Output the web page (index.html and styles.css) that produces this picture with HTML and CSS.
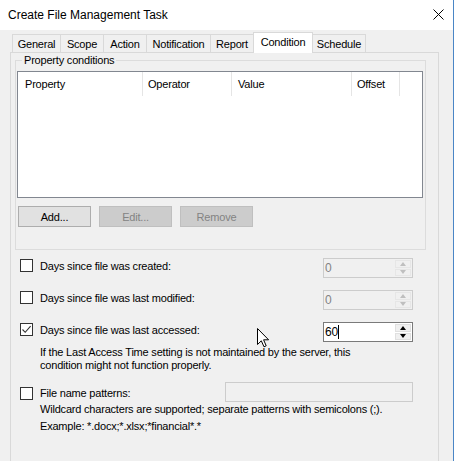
FILE: index.html
```html
<!DOCTYPE html>
<html>
<head>
<meta charset="utf-8">
<link rel="stylesheet" href="styles.css">
</head>
<body>
<div class="screen">
  <div class="window">
    <div class="titlebar">
      <span class="title">Create File Management Task</span>
      <svg class="close" width="11" height="11" viewBox="0 0 11 11"><path d="M0.5 0.5 L10.5 10.5 M10.5 0.5 L0.5 10.5" stroke="#000" stroke-width="1"/></svg>
    </div>
    <div class="client">
      <div class="tabstrip">
        <div class="tab t-general">General</div>
        <div class="tab t-scope">Scope</div>
        <div class="tab t-action">Action</div>
        <div class="tab t-notif">Notification</div>
        <div class="tab t-report">Report</div>
        <div class="tab t-cond selected">Condition</div>
        <div class="tab t-sched">Schedule</div>
      </div>
      <div class="page">
        <fieldset class="group">
          <legend>Property conditions</legend>
          <div class="listview">
            <div class="lv-header">
              <div class="col c1">Property</div>
              <div class="col c2">Operator</div>
              <div class="col c3">Value</div>
              <div class="col c4">Offset</div>
            </div>
          </div>
          <div class="buttons">
            <div class="btn">Add...</div>
            <div class="btn disabled">Edit...</div>
            <div class="btn disabled">Remove</div>
          </div>
        </fieldset>

        <div class="options">
          <div class="row">
            <span class="cb"></span>
            <span class="label">Days since file was created:</span>
            <div class="spin disabled">
              <span class="spin-val">0</span>
              <div class="spin-btns">
                <span class="sb up"><i class="arr-up"></i></span>
                <span class="sb down"><i class="arr-down"></i></span>
              </div>
            </div>
          </div>
          <div class="row">
            <span class="cb"></span>
            <span class="label">Days since file was last modified:</span>
            <div class="spin disabled">
              <span class="spin-val">0</span>
              <div class="spin-btns">
                <span class="sb up"><i class="arr-up"></i></span>
                <span class="sb down"><i class="arr-down"></i></span>
              </div>
            </div>
          </div>
          <div class="row">
            <span class="cb checked"><svg width="11" height="11" viewBox="0 0 11 11"><path d="M1.5 5.5 L4.2 8.3 L9.6 2.2" fill="none" stroke="#333" stroke-width="1.1"/></svg></span>
            <span class="label">Days since file was last accessed:</span>
            <div class="spin">
              <span class="spin-val">60<span class="caret"></span></span>
              <div class="spin-btns">
                <span class="sb up"><i class="arr-up"></i></span>
                <span class="sb down"><i class="arr-down"></i></span>
              </div>
            </div>
          </div>
          <div class="note">If the Last Access Time setting is not maintained by the server, this<br>condition might not function properly.</div>
          <div class="row row-pattern">
            <span class="cb"></span>
            <span class="label">File name patterns:</span>
            <div class="textbox disabled"></div>
          </div>
          <div class="note note2">Wildcard characters are supported; separate patterns with semicolons (;).<br>Example: *.docx;*.xlsx;*financial*.*</div>
        </div>
      </div>
    </div>
  </div>
  <div class="edge"></div>
  <svg class="cursor" width="13" height="21" viewBox="0 0 13 21"><path d="M0.5 0.5 L0.5 16.5 L4.3 12.8 L7 18.8 L9.2 17.8 L6.6 11.8 L11.6 11.8 Z" fill="#fff" stroke="#000" stroke-width="1" stroke-linejoin="miter"/></svg>
</div>
</body>
</html>
```
FILE: styles.css
```css
html, body {
  margin: 0;
  padding: 0;
  background: #ffffff;
}
body {
  font-family: "Liberation Sans", Arial, sans-serif;
  font-size: 11px;
  letter-spacing: -0.2px;
  color: #000;
}
.screen {
  position: relative;
  width: 456px;
  height: 461px;
  display: flex;
  overflow: hidden;
}
.window {
  width: 453px;
  height: 461px;
  background: #f0f0f0;
  display: flex;
  flex-direction: column;
}
.edge {
  width: 1px;
  height: 461px;
  background: #4a86c6;
}
.titlebar {
  height: 30px;
  background: #ffffff;
  display: flex;
  align-items: center;
  justify-content: space-between;
  padding: 0 9px 0 8px;
  flex: none;
}
.title {
  font-size: 12px;
  letter-spacing: 0;
  line-height: 16px;
}
.close {
  display: block;
  margin-top: -2px;
}
.client {
  padding: 2px 0 0 10px;
  flex: 1;
  display: flex;
  flex-direction: column;
}
.tabstrip {
  display: flex;
  align-items: flex-end;
  height: 20px;
  padding-left: 2px;
  position: relative;
  z-index: 1;
}
.tab {
  box-sizing: border-box;
  height: 18px;
  border-top: 1px solid #d9d9d9;
  border-right: 1px solid #d9d9d9;
  background: #f0f0f0;
  text-align: center;
  line-height: 18px;
}
.t-general { width: 49px; border-left: 1px solid #d9d9d9; }
.t-scope { width: 43px; }
.t-action { width: 43px; }
.t-notif { width: 64px; }
.t-report { width: 43px; }
.t-cond { width: 60px; margin-left: -1px; }
.t-sched { width: 53px; }
.tab.selected {
  height: 21px;
  margin-bottom: -1px;
  background: #ffffff;
  border-left: 1px solid #d9d9d9;
  line-height: 18px;
}
.page {
  box-sizing: border-box;
  width: 429px;
  flex: 1;
  border: 1px solid #d9d9d9;
  border-bottom: none;
  background: #f0f0f0;
}
.group {
  box-sizing: border-box;
  width: 411px;
  height: 197px;
  margin: 0 0 0 4px;
  padding: 0;
  border: 1px solid #dcdcdc;
  min-width: 0;
}
.group legend {
  margin-left: 6px;
  padding: 0 2px;
  line-height: 15px;
}
.listview {
  box-sizing: border-box;
  width: 406px;
  height: 127px;
  margin: 3px 0 0 1px;
  border: 1px solid #828790;
  background: #ffffff;
}
.lv-header {
  display: flex;
  height: 24px;
}
.col {
  box-sizing: border-box;
  line-height: 25px;
  border-right: 1px solid #e5e5e5;
  padding-left: 6px;
}
.c1 { width: 125px; padding-left: 7px; }
.c2 { width: 89px; padding-left: 5px; }
.c3 { width: 120px; padding-left: 6px; }
.c4 { width: 48px; padding-left: 5px; }
.buttons {
  display: flex;
  gap: 8px;
  margin: 8px 0 0 2px;
}
.btn {
  box-sizing: border-box;
  width: 73px;
  height: 21px;
  border: 1px solid #adadad;
  background: #e1e1e1;
  text-align: center;
  line-height: 20px;
}
.btn.disabled {
  background: #cccccc;
  border-color: #bfbfbf;
  color: #838383;
}
.options {
  margin: 8px 0 0 9px;
  width: 393px;
}
.row {
  display: flex;
  align-items: flex-start;
  height: 20px;
  margin-bottom: 12px;
}
.cb {
  box-sizing: border-box;
  width: 13px;
  height: 13px;
  border: 1px solid #333333;
  background: #ffffff;
  margin-top: 1px;
  flex: none;
  display: flex;
  align-items: center;
  justify-content: center;
}
.cb svg { display: block; }
.label {
  margin-left: 7px;
  line-height: 16px;
}
.spin {
  margin-left: auto;
  box-sizing: border-box;
  width: 90px;
  height: 20px;
  border: 1px solid #7a7a7a;
  background: #ffffff;
  display: flex;
  align-items: stretch;
  font-size: 12px;
}
.spin.disabled {
  border-color: #cccccc;
  background: #f0f0f0;
  color: #838383;
}
.spin-val {
  flex: 1;
  padding-left: 1px;
  line-height: 18px;
  display: flex;
  align-items: center;
}
.caret {
  display: inline-block;
  width: 1px;
  height: 14px;
  background: #000;
}
.spin-btns {
  width: 16px;
  display: flex;
  flex-direction: column;
  padding: 1px 1px 1px 0;
  gap: 1px;
}
.sb {
  flex: 1;
  display: flex;
  align-items: center;
  justify-content: center;
  background: #f0f0f0;
  border: 1px solid #e0e0e0;
}
.spin.disabled .sb {
  border-color: #e6e6e6;
}
.arr-up {
  width: 0;
  height: 0;
  border-left: 3.5px solid transparent;
  border-right: 3.5px solid transparent;
  border-bottom: 4px solid #000;
}
.arr-down {
  width: 0;
  height: 0;
  border-left: 3.5px solid transparent;
  border-right: 3.5px solid transparent;
  border-top: 4px solid #000;
}
.spin.disabled .arr-up { border-bottom-color: #bfbfbf; }
.spin.disabled .arr-down { border-top-color: #bfbfbf; }
.note {
  margin: -8px 0 0 20px;
  line-height: 13px;
  white-space: nowrap;
}
.row-pattern {
  margin-top: 10px;
  margin-bottom: 0;
}
.row-pattern .cb {
  margin-top: 5px;
}
.row-pattern .label {
  margin-top: 3px;
}
.textbox {
  margin-left: auto;
  box-sizing: border-box;
  width: 188px;
  height: 20px;
  border: 1px solid #cccccc;
  background: #f0f0f0;
}
.note2 {
  margin-top: -1px;
  line-height: 17px;
}
.cursor {
  position: absolute;
  left: 257px;
  top: 328px;
}
```
